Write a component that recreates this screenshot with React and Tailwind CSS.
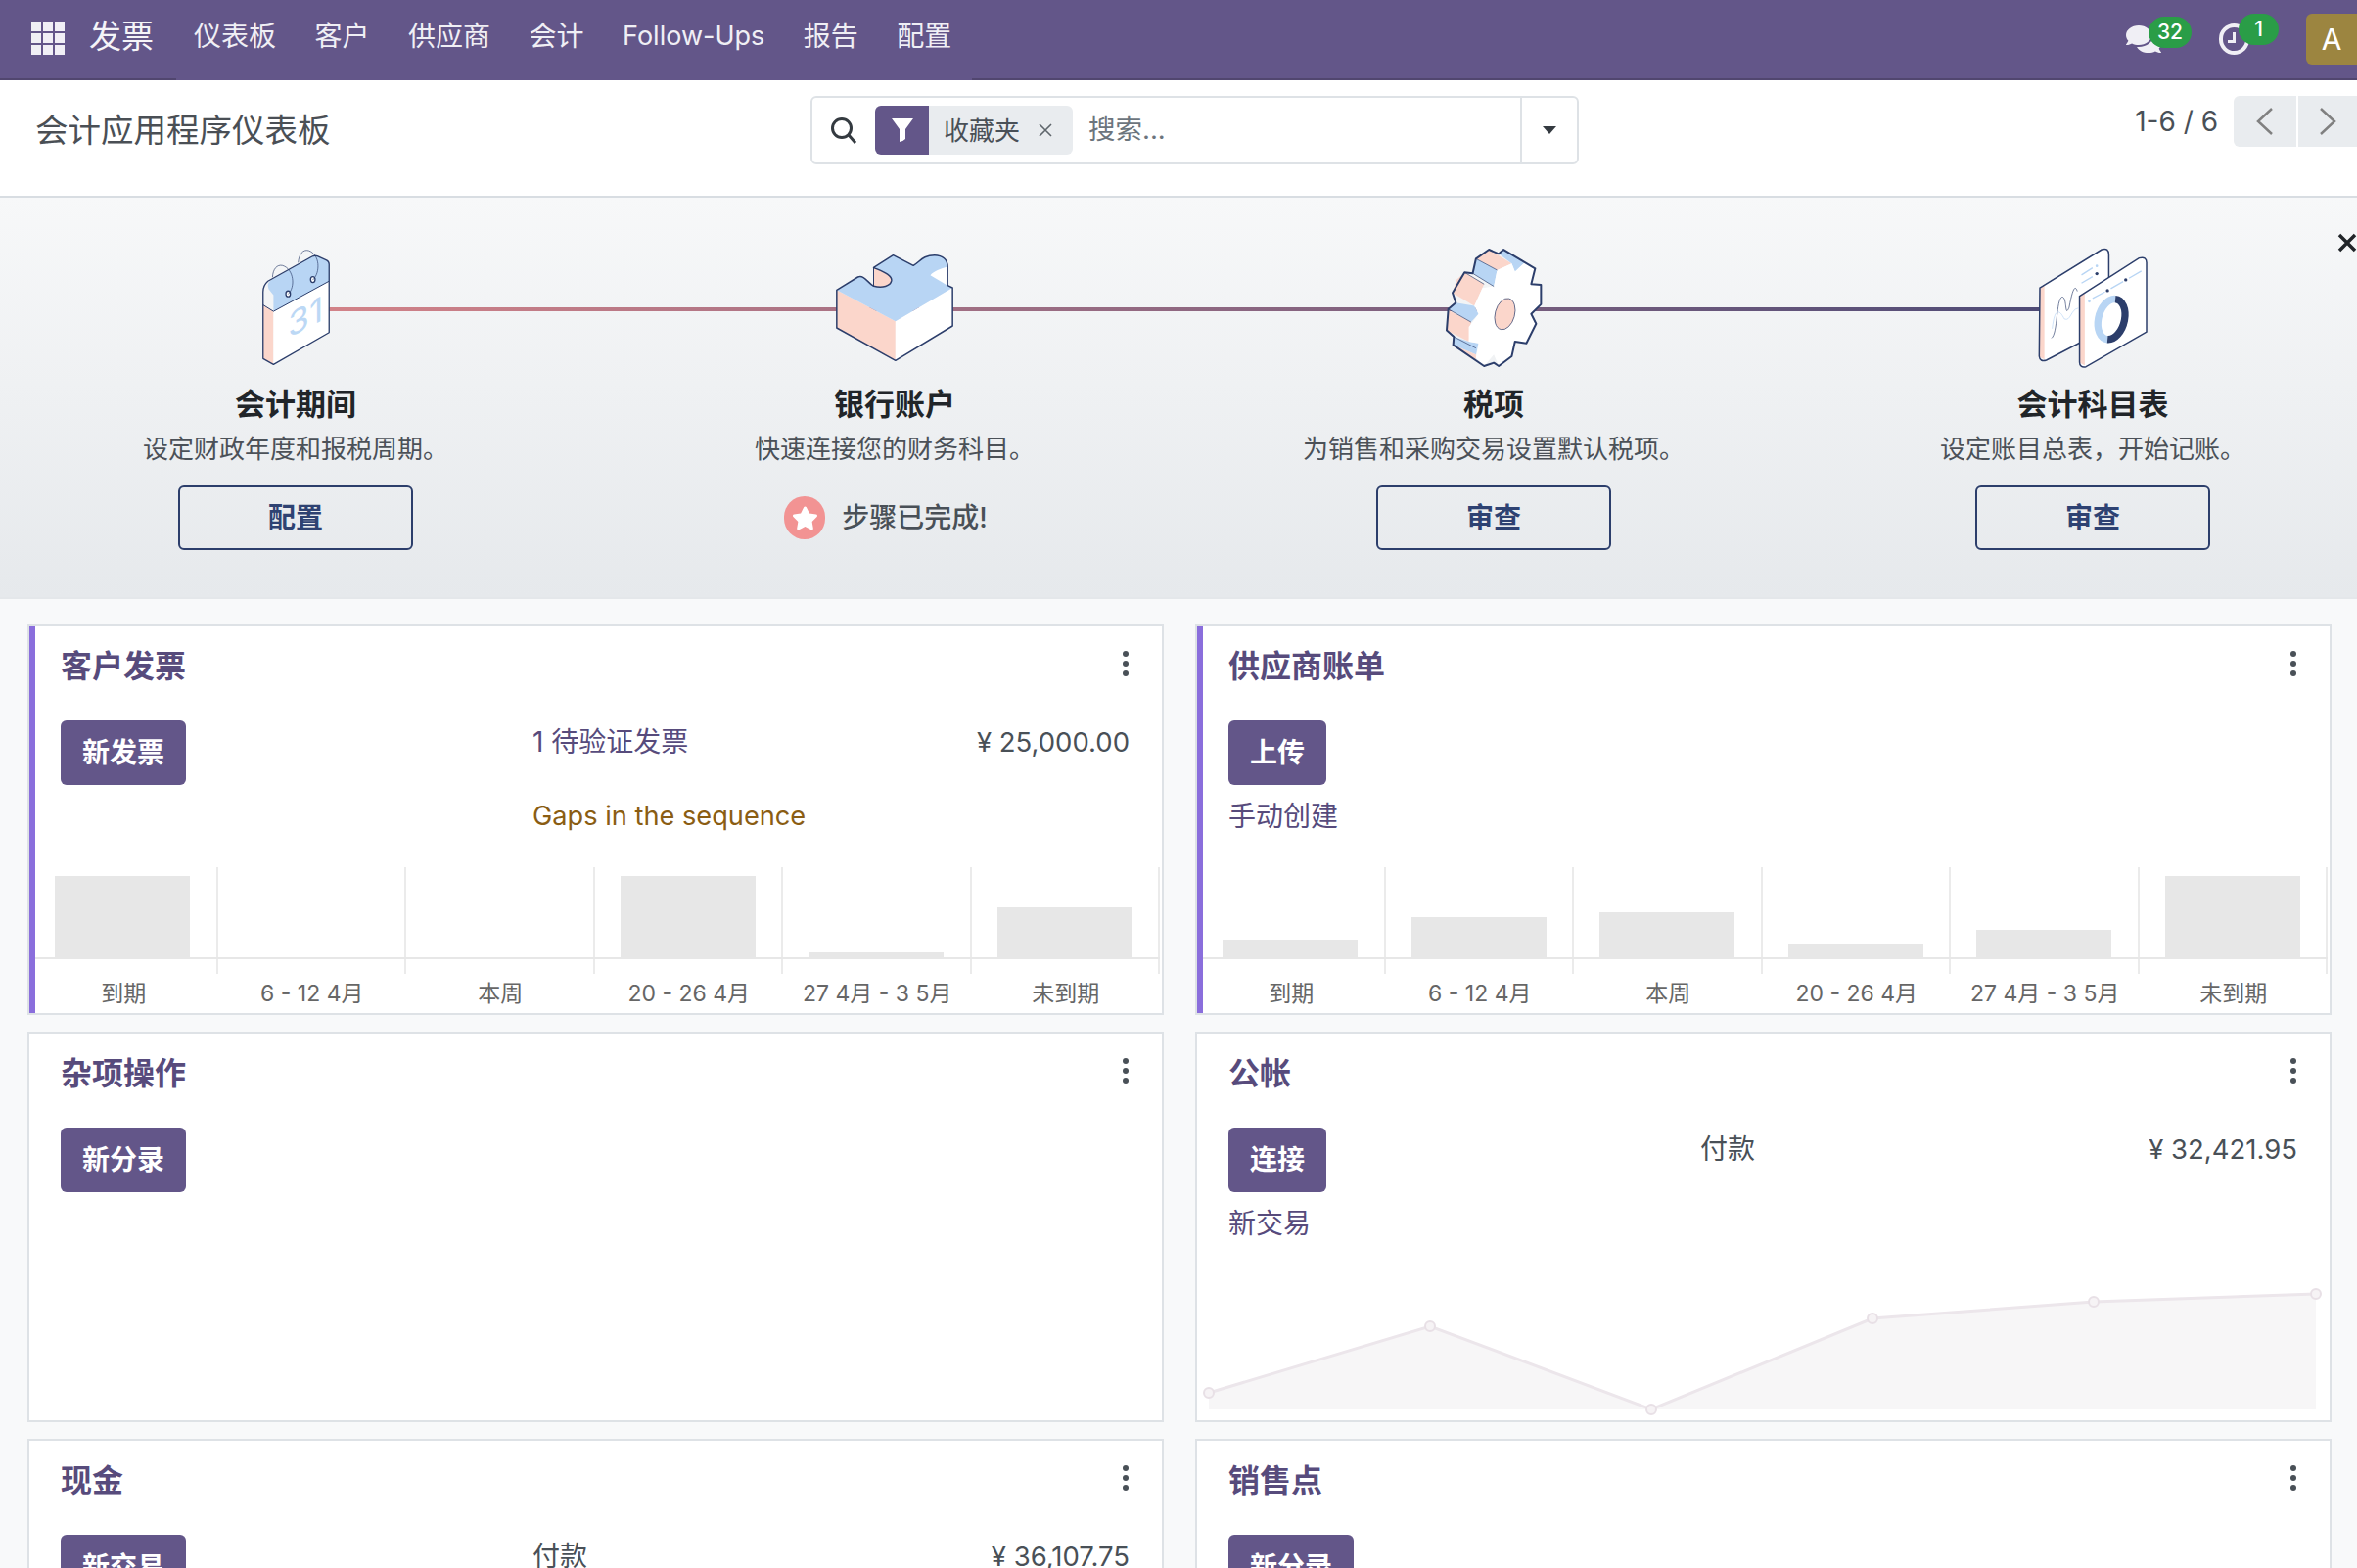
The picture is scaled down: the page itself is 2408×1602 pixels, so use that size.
import { FaComments, FaStar } from 'react-icons/fa';

const CJK = "font-['Inter','Noto_Sans_CJK_SC',sans-serif]";

const navItems = ['仪表板', '客户', '供应商', '会计', 'Follow-Ups', '报告', '配置'];

const ink = '#2c3e6b';
const blue = '#b8d5f4';
const pink = '#fbd6cb';

function CalendarArt() {
    return (
        <svg viewBox="440 72 213 361" className="w-[71px] h-[120px] relative" fill="none">
            <path d="M445 205 L445 410 L477 428 L477 265 L445 245 Z" fill={pink} />
            <path d="M477 265 L648 172 L648 330 L477 428 Z" fill="#fff" />
            <path d="M477 265 L648 172 L648 120 Q648 112 640 108 L612 95 Q604 92 596 96 L470 168 Q455 178 462 196 L477 215 Z" fill={blue} />
            <path d="M445 205 Q445 185 460 172 L596 96 Q604 92 612 95 L640 108 Q648 112 648 120 L648 330 L477 428 L445 410 Z" stroke={ink} strokeWidth="4" strokeLinejoin="round" />
            <path d="M445 245 L477 265 L648 172" stroke={ink} strokeWidth="3" />
            <text x="0" y="0" transform="translate(522 348) skewY(-28)" fontFamily="Inter, sans-serif" fontSize="105" fill="#bcd8f5">31</text>
            <ellipse cx="522" cy="211" rx="7" ry="9" fill="#fff" stroke={ink} strokeWidth="4" />
            <ellipse cx="598" cy="167" rx="7" ry="9" fill="#fff" stroke={ink} strokeWidth="4" />
            <path d="M522 212 C545 190 540 135 505 124 C488 120 475 135 474 160" stroke={ink} strokeWidth="2" />
            <path d="M598 168 C622 145 620 90 585 78 C568 73 555 90 553 115" stroke={ink} strokeWidth="2" />
        </svg>
    );
}

function PuzzleArt() {
    return (
        <svg viewBox="400 85 365 333" className="w-[122px] h-[111px] relative" fill="none">
            <path d="M405 197 L585 293 L585 413 L405 313 Z" fill={pink} />
            <path d="M585 293 L760 190 L760 307 L585 413 Z" fill="#fff" />
            <path d="M405 197 L470 157 C490 150 500 175 518 185 L518 128 L578 90 L640 122 C660 110 670 90 705 90 C730 90 745 105 745 125 L745 183 L760 190 L585 293 Z" fill={blue} />
            <path d="M518 128 C545 140 575 150 573 168 C570 185 540 192 518 185 Z" fill={pink} />
            <path d="M692 152 C700 140 725 132 745 125 L745 183 Z" fill="#fff" />
            <path d="M405 197 L470 157 C490 150 500 175 518 185 C545 192 570 185 573 168 C575 150 545 140 518 128 L578 90 L640 122 C660 110 670 90 705 90 C730 90 745 105 745 125 L745 183 L760 190 L760 307 L585 413 L405 313 Z" stroke={ink} strokeWidth="4.5" strokeLinejoin="round" />
            <path d="M518 128 L518 185" stroke={ink} strokeWidth="3" />
        </svg>
    );
}

function GearArt() {
    return (
        <svg viewBox="234 67 304 368" className="w-[101px] h-[123px] relative" fill="none">
            <path d="M330 100 L370 72 L440 115 L395 135 Z" fill={pink} />
            <path d="M400 85 L415 72 L480 112 L450 140 L440 115 Z" fill={blue} />
            <path d="M330 100 L395 135 L385 185 L320 145 Z" fill={blue} />
            <path d="M295 142 L355 178 L325 245 L258 205 L270 165 Z" fill={pink} />
            <path d="M268 235 L325 245 L338 270 L315 295 L245 255 Z" fill={blue} />
            <path d="M245 258 L315 295 L308 355 L240 320 Z" fill={pink} />
            <path d="M262 340 L308 355 L338 360 L330 395 L260 365 Z" fill={blue} />
            <path d="M260 365 L330 395 L330 410 Z" fill={pink} />
            <path d="M450 140 L480 112 L512 130 L500 178 L530 180 L530 240 L500 270 L515 300 L485 360 L450 355 L440 400 L400 430 L385 395 L355 430 L330 405 L338 360 L308 355 L308 310 L338 270 L325 245 L350 190 L385 185 L395 135 L440 115 Z" fill="#fff" />
            <ellipse cx="419" cy="270" rx="30" ry="49" transform="rotate(15 419 270)" fill={pink} stroke={ink} strokeWidth="2" />
            <path d="M330 100 L370 72 L400 85 L415 72 L512 130 L500 178 L530 180 L530 240 L500 270 L515 300 L485 360 L450 355 L440 400 L400 430 L385 420 L355 430 L260 365 L262 340 L240 320 L245 255 L268 235 L258 205 L295 142 L320 145 Z" stroke={ink} strokeWidth="6" strokeLinejoin="round" />
            <path d="M330 100 L395 135 M320 145 L385 185 M295 142 L355 178 M245 255 L315 295 M262 340 L330 375" stroke={ink} strokeWidth="2" />
        </svg>
    );
}

function ChartArt() {
    return (
        <svg viewBox="244 64 340 374" className="w-[113px] h-[125px] relative" fill="none">
            <path d="M250 190 L440 72 Q462 65 462 88 L462 312 L270 412 Q250 418 248 400 Z" fill="#fff" />
            <path d="M250 190 L264 180 L264 410 L248 402 Z" fill={pink} />
            <path d="M250 190 L440 72 Q462 65 462 88 L462 312 L270 412 Q250 418 248 400 Z" stroke={ink} strokeWidth="4.5" />
            <path d="M378 150 L412 128 M378 175 L412 155" stroke={blue} strokeWidth="4" />
            <circle cx="425" cy="122" r="4" fill={blue} />
            <circle cx="425" cy="146" r="5" fill={ink} />
            <path d="M286 344 C305 330 300 225 318 218 C335 215 325 285 340 250 C350 195 358 178 365 200" stroke={ink} strokeWidth="2" />
            <path d="M288 315 C295 250 310 255 325 285 C345 295 345 255 368 252" stroke={blue} strokeWidth="2" />
            <path d="M372 215 L555 98 Q578 92 578 112 L578 325 L392 432 Q372 436 372 418 Z" fill="#fff" />
            <path d="M373 214 L388 205 L388 428 L373 420 Z" fill={pink} />
            <path d="M372 215 L555 98 Q578 92 578 112 L578 325 L392 432 Q372 436 372 418 Z" stroke={ink} strokeWidth="4.5" />
            <path d="M412 222 L450 202 M468 192 L506 170 M524 160 L562 138" stroke={blue} strokeWidth="4" />
            <circle cx="402" cy="231" r="4" fill={blue} />
            <circle cx="458" cy="198" r="5" fill={ink} />
            <circle cx="514" cy="165" r="5" fill={ink} />
            <path d="M482 224 A39 62 15 0 0 458 348" stroke={blue} strokeWidth="22" />
            <path d="M482 224 A39 62 15 0 1 458 348" stroke={ink} strokeWidth="22" />
        </svg>
    );
}

function Step({ art, title, text, button }) {
    return (
        <div className="flex flex-col items-center">
            <div className="h-[124px] flex items-center justify-center">{art}</div>
            <div className="mt-[17px] text-[31px] leading-[40px] font-semibold text-[#212529]">{title}</div>
            <div className="mt-[6px] text-[26px] leading-[40px] text-[#4b5158]">{text}</div>
            {button ? (
                <button className="mt-[17px] w-[240px] h-[66px] border-2 border-[#2c3e6b] rounded-[6px] text-[28px] font-bold text-[#2e4272]">
                    {button}
                </button>
            ) : (
                <div className="mt-[17px] h-[66px] flex items-center gap-[17px] pr-[18px]">
                    <span className="w-[42px] h-[44px] rounded-full bg-[#f29393] flex items-center justify-center">
                        <FaStar className="text-white text-[27px]" />
                    </span>
                    <span className="text-[28px] font-medium text-[#495057]">步骤已完成!</span>
                </div>
            )}
        </div>
    );
}

function Bars({ values }) {
    const labels = ['到期', '6 - 12 4月', '本周', '20 - 26 4月', '27 4月 - 3 5月', '未到期'];
    return (
        <div className="mt-auto pr-[2px] grid grid-cols-6">
            {values.map((v, i) => (
                <div key={i}>
                    <div className="h-[109px] border-r-2 border-[#ebebeb] pt-[9px]">
                        <div className="h-[83px] flex items-end justify-center">
                            <div className="w-[138px] bg-[#e7e7e7]" style={{ height: v }} />
                        </div>
                        <div className="h-[2px] bg-[#e7e7e7] -mr-[2px]" />
                    </div>
                    <div className="h-[40px] leading-[40px] text-center text-[23px] text-[#666666] whitespace-nowrap">{labels[i]}</div>
                </div>
            ))}
        </div>
    );
}

function LineChart() {
    const pts = [[12, 113], [238, 45], [464, 130], [690, 37], [916, 20], [1143, 12]];
    const line = pts.map((p) => p.join(',')).join(' ');
    return (
        <svg viewBox="0 0 1157 141" className="mt-auto block w-full h-[141px]" fill="none">
            <polygon points={`12,130 ${line} 1143,130`} fill="#f7f6f7" />
            <polyline points={line} stroke="#ece6eb" strokeWidth="3" />
            {pts.map((p, i) => (
                <circle key={i} cx={p[0]} cy={p[1]} r="5" fill="#f6f3f5" stroke="#e8e0e6" strokeWidth="2" />
            ))}
        </svg>
    );
}

function PrimaryBtn({ children }) {
    return (
        <button className="h-[66px] px-[22px] rounded-[6px] bg-[#635689] text-white text-[28px] font-bold">{children}</button>
    );
}

function Card({ title, action, link, mid, midSub, amount, accent, children }) {
    return (
        <div className="relative h-[399px] border-2 border-[#dee2e6] bg-white flex flex-col">
            {accent && <div className="absolute left-0 top-0 bottom-0 w-[6px] bg-[#8a6edc]" />}
            <div className="pt-[19px] pl-[32px] pr-[34px] flex items-center justify-between">
                <div className="text-[32px] leading-[44px] font-semibold text-[#574b7c]">{title}</div>
                <div className="flex flex-col gap-[4px] -mt-[6px]">
                    <span className="w-[6px] h-[6px] rounded-full bg-[#495057]" />
                    <span className="w-[6px] h-[6px] rounded-full bg-[#495057]" />
                    <span className="w-[6px] h-[6px] rounded-full bg-[#495057]" />
                </div>
            </div>
            <div className="mt-[33px] pl-[32px] pr-[33px] grid grid-cols-[482px_1fr_auto] gap-y-[11px] text-[28px] leading-[40px]">
                <div><PrimaryBtn>{action}</PrimaryBtn></div>
                <div className={`pt-[2px] ${mid && mid.startsWith('1') ? 'text-[#574b7c]' : 'text-[#495057]'}`}>{mid}</div>
                <div className="pt-[2px] text-[27.5px] text-[#495057]">{amount}</div>
                {(link || midSub) && <div className="pt-px text-[#574b7c]">{link}</div>}
                {(link || midSub) && <div className="pt-px text-[27.2px] text-[#8a5d13]">{midSub}</div>}
            </div>
            {children}
        </div>
    );
}

export default function App() {
    return (
        <div className={`w-[2408px] h-[1602px] overflow-hidden bg-[#f8f9fa] ${CJK}`}>
            {/* top menu */}
            <nav className="relative h-[82px] bg-[#635689] border-b-2 border-[#51466f] flex items-center text-white">
                <div className="absolute left-[180px] -bottom-[2px] w-[813px] h-[2px] bg-[#635689]" />
                <div className="ml-[32px] w-[34px] h-[34px] grid grid-cols-3 gap-[2px] -mt-[2px]">
                    {Array.from({ length: 9 }).map((_, i) => (
                        <span key={i} className="bg-[#f0eff5]" />
                    ))}
                </div>
                <span className="ml-[25px] -mt-[5px] text-[33px] text-[#f5f4f8]">发票</span>
                <div className="ml-[41px] -mt-[6px] flex items-center gap-[39.5px] text-[28px] text-[#f0eff5]">
                    {navItems.map((item) => (
                        <span key={item} className={item === 'Follow-Ups' ? 'text-[27px]' : ''}>{item}</span>
                    ))}
                </div>
                <div className="ml-auto flex items-center">
                    <span className="relative w-[36px] h-[36px] flex items-center">
                        <FaComments className="text-[36px] text-[#f0eff5]" />
                        <span className="absolute left-[23px] -top-[5px] w-[44px] h-[32px] rounded-full bg-[#2a9d47] text-white text-[21px] font-medium flex items-center justify-center">32</span>
                    </span>
                    <span className="relative ml-[59px] w-[31px] h-[32px]">
                        <span className="block w-[31px] h-[32px] rounded-full border-[4px] border-[#f0eff5]" />
                        <span className="absolute left-[14px] top-[9px] w-[3px] h-[10px] bg-[#f0eff5]" />
                        <span className="absolute left-[9px] top-[17px] w-[8px] h-[3px] bg-[#f0eff5]" />
                        <span className="absolute left-[20px] -top-[10px] w-[41px] h-[32px] rounded-full bg-[#2a9d47] text-white text-[21px] font-medium flex items-center justify-center">1</span>
                    </span>
                    <span className="ml-[58px] w-[52px] h-[52px] rounded-l-[6px] bg-[#9c8540] text-white text-[30px] flex items-center justify-center">A</span>
                </div>
            </nav>

            {/* control panel */}
            <div className="relative h-[120px] bg-white border-b-2 border-[#d8dde2] flex items-start">
                <h1 className="ml-[36px] mt-[29px] text-[33.5px] leading-[44px] text-[#4a4f55]">会计应用程序仪表板</h1>
                <div className="absolute left-[828px] top-[16px] w-[785px] h-[70px] border-2 border-[#dee2e6] rounded-[6px] flex items-center">
                    <svg viewBox="0 0 28 28" className="ml-[18px] w-[28px] h-[28px]" fill="none" stroke="#343a40" strokeWidth="3">
                        <circle cx="12" cy="12" r="9.5" />
                        <path d="M19 19 L26 27" />
                    </svg>
                    <div className="ml-[18px] flex h-[50px]">
                        <span className="w-[55px] bg-[#635689] rounded-l-[6px] flex items-center justify-center">
                            <svg viewBox="0 0 22 24" className="w-[22px] h-[24px]" fill="#fff">
                                <path d="M0 0 H22 L14 11 V21 Q11 24 8 24 V11 Z" />
                            </svg>
                        </span>
                        <span className="w-[147px] bg-[#e9ecef] rounded-r-[6px] pl-[15px] flex items-center text-[26px] text-[#495057]">
                            收藏夹
                            <svg viewBox="0 0 14 14" className="ml-[19px] w-[14px] h-[14px]" stroke="#5f666c" strokeWidth="1.6">
                                <path d="M1 1 L13 13 M13 1 L1 13" />
                            </svg>
                        </span>
                    </div>
                    <span className="ml-[16px] text-[27.5px] text-[#6c757d]">搜索...</span>
                    <span className="ml-auto w-[58px] h-full border-l-2 border-[#dee2e6] flex items-center justify-center">
                        <span className="w-0 h-0 border-x-[7px] border-x-transparent border-t-[8px] border-t-[#343a40]" />
                    </span>
                </div>
                <div className="ml-auto mt-[16px] flex items-center">
                    <span className="text-[28px] leading-[52px] text-[#495057] mr-[16px]">1-6 / 6</span>
                    <span className="w-[64px] h-[52px] bg-[#e9ecef] rounded-l-[6px] flex items-center justify-center">
                        <svg viewBox="0 0 18 30" className="w-[18px] h-[30px]" fill="none" stroke="#808080" strokeWidth="2.5"><path d="M16 2 L2 15 L16 28" /></svg>
                    </span>
                    <span className="ml-[2px] w-[60px] h-[52px] bg-[#e9ecef] flex items-center justify-center">
                        <svg viewBox="0 0 18 30" className="w-[18px] h-[30px]" fill="none" stroke="#808080" strokeWidth="2.5"><path d="M2 2 L16 15 L2 28" /></svg>
                    </span>
                </div>
            </div>

            {/* onboarding banner */}
            <section className="relative h-[410px] bg-gradient-to-b from-[#f7f8f9] to-[#e6e9ec] border-b-2 border-[#e4e7ea]">
                <div className="absolute left-[336px] top-[112px] w-[1750px] h-[4px] bg-gradient-to-r from-[#d28288] to-[#4f4b76]" />
                <svg viewBox="0 0 20 20" className="absolute left-[2388px] top-[36px] w-[20px] h-[20px]" stroke="#212529" strokeWidth="3.5">
                    <path d="M2 2 L18 18 M18 2 L2 18" />
                </svg>
                <div className="relative w-[2448px] -ml-[4px] pt-[50px] grid grid-cols-4">
                    <Step art={<CalendarArt />} title="会计期间" text="设定财政年度和报税周期。" button="配置" />
                    <Step art={<PuzzleArt />} title="银行账户" text="快速连接您的财务科目。" />
                    <Step art={<GearArt />} title="税项" text="为销售和采购交易设置默认税项。" button="审查" />
                    <Step art={<ChartArt />} title="会计科目表" text="设定账目总表，开始记账。" button="审查" />
                </div>
            </section>

            {/* journals */}
            <div className="pl-[28px] pr-[26px] pt-[26px] grid grid-cols-2 gap-x-[32px] gap-y-[17px]">
                <Card accent title="客户发票" action="新发票" mid="1 待验证发票" midSub="Gaps in the sequence" link=" " amount="¥ 25,000.00">
                    <Bars values={[83, 0, 0, 83, 5, 51]} />
                </Card>
                <Card accent title="供应商账单" action="上传" link="手动创建">
                    <Bars values={[18, 41, 46, 14, 28, 83]} />
                </Card>
                <Card title="杂项操作" action="新分录" />
                <Card title="公帐" action="连接" link="新交易" mid="付款" amount="¥ 32,421.95">
                    <LineChart />
                </Card>
                <Card title="现金" action="新交易" mid="付款" amount="¥ 36,107.75" />
                <Card title="销售点" action="新分录" />
            </div>
        </div>
    );
}
